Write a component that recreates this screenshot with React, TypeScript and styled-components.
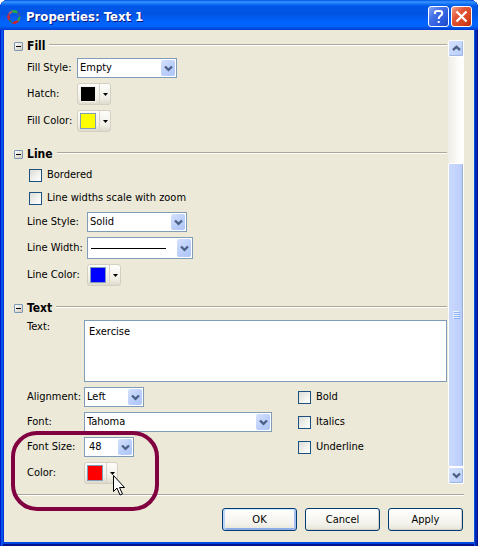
import React from "react";
import styled, { createGlobalStyle, css } from "styled-components";

const UI_FONT = `"DejaVu Sans Condensed", "DejaVu Sans", sans-serif`;
const FACE = "#ece9d8";
const FIELD_BORDER = "#7f9db9";

const GlobalStyle = createGlobalStyle`
  *, *::before, *::after { box-sizing: border-box; }
  body { margin: 0; background: #fff; }
  button, input, select, textarea { font: inherit; color: inherit; margin: 0; }
`;

const Dialog = styled.main`
  display: flex;
  flex-direction: column;
  min-height: 100vh;
  padding: 0 4px 4px;
  border-radius: 8px 8px 0 0;
  background: #0831d9;
  box-shadow: inset 1px 0 #0019cf, inset 3px 0 #0054e6, inset -1px 0 #00138c,
    inset -3px 0 #0026b8, inset -4px 0 #0855dd, inset 0 -2px #00138c, inset 0 -4px #0046e0;
  font: 11px/14px ${UI_FONT};
  color: #000;
  overflow: hidden;
`;

const TitleBar = styled.header`
  display: flex;
  align-items: center;
  height: 30px;
  margin: 0 -4px;
  padding: 3px 6px 0;
  gap: 2px;
  background: linear-gradient(
    #0058e6 0, #3a93ff 2px, #1274f5 4px, #0058e8 6px, #0054e3 14px,
    #0061fb 21px, #0066ff 26px, #0050e0 28px, #003dd7 30px
  );
`;

const Title = styled.h1`
  flex: 1;
  margin: 0;
  padding-left: 2px;
  font: bold 13px/18px ${UI_FONT};
  color: #fff;
  text-shadow: 1px 1px #0a1883;
  white-space: nowrap;
`;

const CaptionButton = styled.button<{ $close?: boolean }>`
  width: 21px;
  height: 21px;
  padding: 0;
  border: 1px solid #fff;
  border-radius: 3px;
  background: ${(p) =>
    p.$close
      ? "linear-gradient(135deg, #f0a088 0, #e2583a 35%, #d8401c 75%, #b82f10 100%)"
      : "linear-gradient(135deg, #86a6f4 0, #4672e6 35%, #2858dc 75%, #1c48c0 100%)"};
  svg { display: block; }
`;

const Body = styled.div`
  flex: 1;
  padding: 8px 10px 11px;
  background: ${FACE};
`;

const ScrollPane = styled.div`
  display: flex;
  gap: 1px;
`;

const Sections = styled.div`
  flex: 1;
  min-width: 0;
  display: flex;
  flex-direction: column;
  gap: 14px;
`;

const SectionHeader = styled.div`
  display: flex;
  align-items: center;
  height: 16px;
  margin-bottom: 4px;
`;

const SectionTitle = styled.h2`
  margin: 0 4px;
  font: bold 12px/16px ${UI_FONT};
`;

const Toggle = styled.button`
  width: 9px;
  height: 9px;
  padding: 0;
  border: 1px solid #7898b5;
  border-radius: 1px;
  background: linear-gradient(135deg, #fff, #d2cabb);
  svg { display: block; }
`;

const rule = css`
  height: 2px;
  border-top: 1px solid #aca899;
  background: #fff;
`;

const HeaderRule = styled.span`
  ${rule}
  flex: 1;
  margin-bottom: 2px;
`;

const Fields = styled.div<{ $columns: string }>`
  display: grid;
  grid-template-columns: ${(p) => p.$columns};
  align-items: center;
  justify-items: start;
  row-gap: 5px;
  padding-left: 13px;
`;

const Label = styled.label<{ $top?: boolean }>`
  white-space: nowrap;
  ${(p) => p.$top && "align-self: start;"}
`;

const ComboFrame = styled.div<{ $width: number; $tall?: boolean }>`
  position: relative;
  width: ${(p) => p.$width}px;
  height: ${(p) => (p.$tall ? 22 : 20)}px;
`;

const ComboSelect = styled.select<{ $indent?: boolean }>`
  appearance: none;
  display: block;
  width: 100%;
  height: 100%;
  padding: 0 18px 0 ${(p) => (p.$indent ? 4 : 2)}px;
  border: 1px solid ${FIELD_BORDER};
  border-radius: 0;
  background: #fff;
`;

const ComboArrow = styled.span`
  position: absolute;
  top: 2px;
  right: 2px;
  bottom: 2px;
  width: 14px;
  display: grid;
  place-items: center;
  border-radius: 2px;
  background: linear-gradient(135deg, #d6e2fd, #b9cdfa 60%, #aec6f8);
  pointer-events: none;
`;

const StrokeSample = styled.span`
  position: absolute;
  left: 4px;
  right: 27px;
  top: 11px;
  height: 1px;
  background: #000;
  pointer-events: none;
`;

const ColorButton = styled.button`
  display: flex;
  align-items: center;
  width: 34px;
  height: 22px;
  padding: 0;
  border: 1px solid #d3d0c2;
  border-radius: 3px;
  background: linear-gradient(#fdfdfb, #f1efe6 70%, #dedbcd);
`;

const Swatch = styled.span<{ $color: string }>`
  width: 16px;
  height: 16px;
  margin: 0 3px 0 2px;
  border: 1px solid ${(p) => (p.$color === "#000000" ? "#f4f2ea" : FIELD_BORDER)};
  background: ${(p) => p.$color};
`;

const DropPart = styled.span`
  align-self: stretch;
  flex: 1;
  display: grid;
  place-items: center;
  border-left: 1px solid #d8d5c8;
`;

const CheckLabel = styled.label<{ $wide?: boolean }>`
  display: flex;
  align-items: center;
  gap: 5px;
  height: 18px;
  white-space: nowrap;
  ${(p) => p.$wide && "grid-column: 1 / -1; padding-left: 2px;"}
`;

const CheckInput = styled.input`
  appearance: none;
  width: 13px;
  height: 13px;
  border: 1px solid #1c5180;
  background: linear-gradient(135deg, #dcdcd7, #f3f3ef 60%, #fff);
`;

const TextBox = styled.textarea`
  display: block;
  grid-column: 2 / -1;
  width: 100%;
  height: 62px;
  padding: 4px;
  border: 1px solid ${FIELD_BORDER};
  border-radius: 0;
  background: #fff;
  resize: none;
  outline: none;
`;

const ScrollBar = styled.div`
  display: flex;
  flex-direction: column;
  width: 16px;
  margin-top: 2px;
  background: linear-gradient(90deg, #eeede5, #fdfdfa 70%, #fff);
`;

const ScrollButton = styled.button`
  display: grid;
  place-items: center;
  width: 16px;
  height: 17px;
  padding: 0;
  border: 1px solid #fff;
  border-radius: 2px;
  background: linear-gradient(135deg, #d6e2fd, #b9cdfa);
  box-shadow: inset -1px -1px #9db6e4;
`;

const ScrollGap = styled.div`
  flex: 107;
`;

const ScrollThumb = styled.div`
  flex: 303;
  display: grid;
  place-items: center;
  border: 1px solid #fff;
  border-radius: 2px;
  background: linear-gradient(90deg, #c9d8fc, #c3d3fd 50%, #b8ccf8);
  box-shadow: inset -1px 0 #98b1d4;
`;

const FooterRule = styled.div`
  ${rule}
  margin-top: 10px;
`;

const Footer = styled.footer`
  display: flex;
  justify-content: flex-end;
  gap: 8px;
  padding: 12px 1px 0 0;
`;

const PushButton = styled.button<{ $primary?: boolean }>`
  width: 75px;
  height: 23px;
  padding: 0;
  border: 1px solid #003c74;
  border-radius: 3px;
  background: linear-gradient(#fff, #f3f2ec 70%, #e6e3d8);
  box-shadow: ${(p) =>
    p.$primary
      ? "inset 0 1px #cee7ff, inset 2px 0 #bcd4f6, inset -2px 0 #a5bff0, inset 0 -2px #89ade4"
      : "inset -1px -1px #d6d0c5"};
`;

const Anchor = styled.div`
  position: relative;
`;

const Highlight = styled.div`
  position: absolute;
  left: -3px;
  bottom: -27px;
  width: 148px;
  height: 80px;
  border: 4px solid #800040;
  border-radius: 26px;
  pointer-events: none;
`;

const ColorAnchor = styled.div`
  position: relative;
`;

const Pointer = styled.svg`
  position: absolute;
  left: 29px;
  top: 13px;
  pointer-events: none;
`;

const Chevron = ({ up }: { up?: boolean }) => (
  <svg width="9" height="7" viewBox="0 0 9 7" aria-hidden="true">
    <path
      d={up ? "M1 5 4.5 1.8 8 5" : "M1 1.5 4.5 4.8 8 1.5"}
      fill="none"
      stroke="#4d6185"
      strokeWidth="2.4"
    />
  </svg>
);

const Logo = () => (
  <svg width="16" height="16" viewBox="0 0 16 16" aria-hidden="true">
    <g>
      <path d="M3 6 2.500 3.500 5.500 1.500 8 2 5 4.500z" fill="#a05a70" />
      <path d="M6 1 10.500 1.300 12.500 4.500 9.500 4.200 6.500 3.500z" fill="#28a84c" />
      <path d="M11 1.800 14 4.500 14.500 8 12.200 7 11.500 4.500z" fill="#3a4fa8" />
      <path d="M14.800 7 13.800 11.500 10.500 13.500 11.500 10.500 12.500 8z" fill="#349a48" />
      <path d="M13 12.500 9.500 15 5.500 14.600 8 12.500 11 11.500z" fill="#d01c2c" />
      <path d="M7 14.800 3.500 12.800 2.500 9.800 5 11.200z" fill="#2f7a50" />
      <path d="M2.200 11.500 1 7.500 2.500 4.200 4 7.500 4.200 10z" fill="#c42c40" />
    </g>
  </svg>
);

const Section = ({ name, columns, children }: { name: string; columns: string; children: React.ReactNode }) => (
  <section>
    <SectionHeader>
      <Toggle type="button" aria-label={`Collapse ${name}`} aria-expanded="true">
        <svg width="7" height="7" viewBox="0 0 7 7" aria-hidden="true">
          <path d="M1 3.5h5" stroke="#000" />
        </svg>
      </Toggle>
      <SectionTitle>{name}</SectionTitle>
      <HeaderRule />
    </SectionHeader>
    <Fields $columns={columns}>{children}</Fields>
  </section>
);

interface ComboProps {
  id: string;
  label: string;
  value: string;
  width: number;
  stroke?: boolean;
  indent?: boolean;
}

const Combo = ({ id, label, value, width, stroke, indent }: ComboProps) => (
  <>
    <Label htmlFor={id}>{label}</Label>
    <ComboFrame $width={width} $tall={stroke}>
      <ComboSelect id={id} $indent={indent}>
        <option>{value}</option>
      </ComboSelect>
      {stroke && <StrokeSample />}
      <ComboArrow>
        <Chevron />
      </ComboArrow>
    </ComboFrame>
  </>
);

const ColorPicker = ({ id, label, color, children }: { id: string; label: string; color: string; children?: React.ReactNode }) => (
  <>
    <Label htmlFor={id}>{label}</Label>
    <ColorAnchor>
      <ColorButton id={id} type="button">
        <Swatch $color={color} />
        <DropPart>
          <svg width="5" height="3" viewBox="0 0 5 3" aria-hidden="true">
            <path d="M0 0h5L2.5 3z" />
          </svg>
        </DropPart>
      </ColorButton>
      {children}
    </ColorAnchor>
  </>
);

const Check = ({ label, wide }: { label: string; wide?: boolean }) => (
  <CheckLabel $wide={wide}>
    <CheckInput type="checkbox" />
    {label}
  </CheckLabel>
);

export default function App() {
  return (
    <>
      <GlobalStyle />
      <Dialog>
        <TitleBar>
          <Logo />
          <Title>Properties: Text 1</Title>
          <CaptionButton type="button" aria-label="Help">
            <svg width="19" height="19" viewBox="0 0 19 19" aria-hidden="true">
              <path d="M6 7V5.5Q6 4 8 4h3q2.200 0 2.200 2.200 0 1.500-1.800 2.600Q9.700 9.800 9.700 12" fill="none" stroke="#fff" strokeWidth="2" />
              <path d="M8.700 14h2v2h-2z" fill="#fff" />
            </svg>
          </CaptionButton>
          <CaptionButton type="button" aria-label="Close" $close>
            <svg width="19" height="19" viewBox="0 0 19 19" aria-hidden="true">
              <path d="M4.500 4.500l10 10M14.500 4.500l-10 10" stroke="#fff" strokeWidth="2.300" />
            </svg>
          </CaptionButton>
        </TitleBar>
        <Body>
          <ScrollPane>
            <Sections>
              <Section name="Fill" columns="50px 1fr">
                <Combo id="fill-style" label="Fill Style:" value="Empty" width={100} />
                <ColorPicker id="hatch" label="Hatch:" color="#000000" />
                <ColorPicker id="fill-color" label="Fill Color:" color="#ffff00" />
              </Section>
              <Section name="Line" columns="60px 1fr">
                <Check label="Bordered" wide />
                <Check label="Line widths scale with zoom" wide />
                <Combo id="line-style" label="Line Style:" value="Solid" width={100} />
                <Combo id="line-width" label="Line Width:" value="" width={106} stroke />
                <ColorPicker id="line-color" label="Line Color:" color="#0000ff" />
              </Section>
              <Anchor>
                <Section name="Text" columns="57px 1fr 149px">
                  <Label htmlFor="text" $top>Text:</Label>
                  <TextBox id="text" defaultValue="Exercise" />
                  <Combo id="alignment" label="Alignment:" value="Left" width={60} />
                  <Check label="Bold" />
                  <Combo id="font" label="Font:" value="Tahoma" width={188} />
                  <Check label="Italics" />
                  <Combo id="font-size" label="Font Size:" value="48" width={50} indent />
                  <Check label="Underline" />
                  <ColorPicker id="text-color" label="Color:" color="#ff0000">
                    <Pointer width="12" height="21" viewBox="0 0 12 21" aria-hidden="true">
                      <path
                        d="M.5.5v16l3.500-3.500 3 7 2.500-1-3-6.500h5z"
                        fill="#fff"
                        stroke="#000"
                      />
                    </Pointer>
                  </ColorPicker>
                </Section>
                <Highlight />
              </Anchor>
            </Sections>
            <ScrollBar>
              <ScrollButton type="button" aria-label="Scroll up">
                <Chevron up />
              </ScrollButton>
              <ScrollGap />
              <ScrollThumb>
                <svg width="7" height="8" viewBox="0 0 7 8" aria-hidden="true">
                  <path d="M0 .5h6M0 2.500h6M0 4.500h6M0 6.500h6" stroke="#eef4fe" />
                  <path d="M1 1.500h6M1 3.500h6M1 5.500h6M1 7.500h6" stroke="#8cb0f8" />
                </svg>
              </ScrollThumb>
              <ScrollButton type="button" aria-label="Scroll down">
                <Chevron />
              </ScrollButton>
            </ScrollBar>
          </ScrollPane>
          <FooterRule />
          <Footer>
            <PushButton type="button" $primary>OK</PushButton>
            <PushButton type="button">Cancel</PushButton>
            <PushButton type="button">Apply</PushButton>
          </Footer>
        </Body>
      </Dialog>
    </>
  );
}
